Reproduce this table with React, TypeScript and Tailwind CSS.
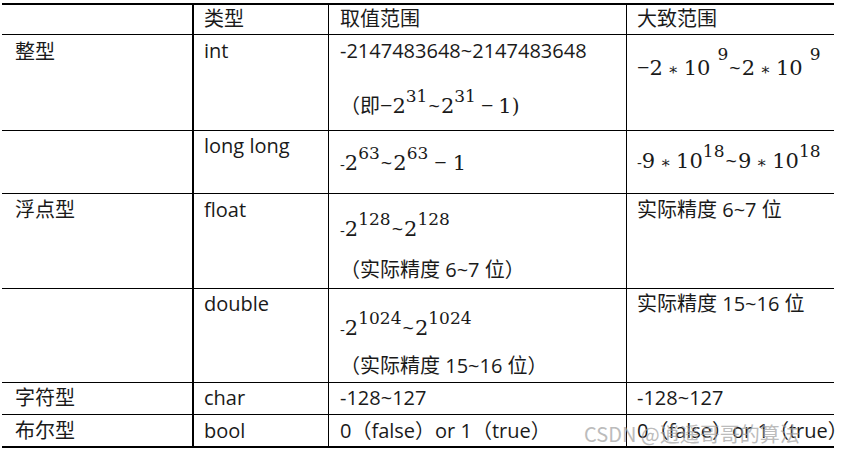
import React from "react";

const text = "font-['Open_Sans','Noto_Sans_CJK_SC',sans-serif] text-[20px] leading-[28px] text-[#1a1a1a]";
const serif = "font-['DejaVu_Serif',serif]";

const Sup = ({ children, hi }: { children: React.ReactNode; hi?: boolean }) => (
  <span className={`${serif} text-[17px] leading-none ${hi ? "align-[15px]" : "align-[11px]"}`}>
    {children}
  </span>
);
const N = ({ children }: { children: React.ReactNode }) => (
  <span className={`${serif} text-[21px]`}>{children}</span>
);
const Tilde = () => <span className="font-['Open_Sans'] text-[20px] mx-[1px]">~</span>;
const Minus = () => <span className="font-['Liberation_Serif'] text-[22px]">−</span>;
const Hy = () => <span className="font-['Open_Sans'] text-[15px]">-</span>;
const Op = () => <span className={`${serif} text-[16px] mx-[5px]`}>∗</span>;

const c1 = "border-r-2 border-black pl-[13px]";
const c2 = "border-r border-black pl-[10px]";
const c3 = "border-r border-black pl-[11px]";
const c4 = "pl-[10px]";

type RowProps = { h: string; cells: React.ReactNode[]; last?: boolean };

const Row = ({ h, cells, last }: RowProps) => (
  <div
    className={`grid grid-cols-[192px_135px_298px_207px] ${h} ${
      last ? "border-b-2" : "border-b"
    } border-black`}
  >
    <div className={c1}>{cells[0]}</div>
    <div className={c2}>{cells[1]}</div>
    <div className={c3}>{cells[2]}</div>
    <div className={c4}>{cells[3]}</div>
  </div>
);

const Line = ({ mt, children }: { mt: string; children: React.ReactNode }) => (
  <div className={`${mt} h-[28px] whitespace-nowrap`}>{children}</div>
);

export default function App() {
  return (
    <div className="w-[841px] h-[453px] bg-white relative overflow-hidden">
      <div className={`${text} ml-[2px] pt-[3px] w-[832px]`}>
        <div className="border-t-2 border-black">
          <Row
            h="h-[30px]"
            cells={[
              <Line mt="mt-0">{""}</Line>,
              <Line mt="mt-0">类型</Line>,
              <Line mt="mt-0">取值范围</Line>,
              <Line mt="mt-0">大致范围</Line>,
            ]}
          />
          <Row
            h="h-[96px]"
            cells={[
              <Line mt="mt-[3px]">整型</Line>,
              <Line mt="mt-[2px]">int</Line>,
              <div>
                <Line mt="mt-[2px]">-2147483648~2147483648</Line>
                <Line mt="mt-[23px]">
                  （即<Minus />
                  <N>2</N>
                  <Sup>31</Sup>
                  <Tilde />
                  <N>2</N>
                  <Sup>31</Sup>
                  <span className="mx-[5px]">
                    <Minus />
                  </span>
                  <N>1</N>
                  <span className={`${serif} text-[20px]`}>)</span>
                </Line>
              </div>,
              <Line mt="mt-[11px]">
                <Minus />
                <N>2</N>
                <Op />
                <N>10</N>
                <span className="ml-[7px]">
                  <Sup hi>9</Sup>
                </span>
                <Tilde />
                <N>2</N>
                <Op />
                <N>10</N>
                <span className="ml-[7px]">
                  <Sup hi>9</Sup>
                </span>
              </Line>,
            ]}
          />
          <Row
            h="h-[63px]"
            cells={[
              <Line mt="mt-0">{""}</Line>,
              <Line mt="mt-[1px]">long long</Line>,
              <Line mt="mt-[14px]">
                <Hy />
                <N>2</N>
                <Sup>63</Sup>
                <Tilde />
                <N>2</N>
                <Sup>63</Sup>
                <span className="mx-[6px]">
                  <Minus />
                </span>
                <N>1</N>
              </Line>,
              <Line mt="mt-[12px]">
                <Hy />
                <N>9</N>
                <Op />
                <N>10</N>
                <Sup>18</Sup>
                <Tilde />
                <N>9</N>
                <Op />
                <N>10</N>
                <Sup>18</Sup>
              </Line>,
            ]}
          />
          <Row
            h="h-[95px]"
            cells={[
              <Line mt="mt-[2px]">浮点型</Line>,
              <Line mt="mt-[2px]">float</Line>,
              <div>
                <Line mt="mt-[17px]">
                  <Hy />
                  <N>2</N>
                  <Sup>128</Sup>
                  <Tilde />
                  <N>2</N>
                  <Sup>128</Sup>
                </Line>
                <Line mt="mt-[17px]">（实际精度 6~7 位）</Line>
              </div>,
              <Line mt="mt-[2px]">实际精度 6~7 位</Line>,
            ]}
          />
          <Row
            h="h-[94px]"
            cells={[
              <Line mt="mt-0">{""}</Line>,
              <Line mt="mt-[1px]">double</Line>,
              <div>
                <Line mt="mt-[21px]">
                  <Hy />
                  <N>2</N>
                  <Sup>1024</Sup>
                  <Tilde />
                  <N>2</N>
                  <Sup>1024</Sup>
                </Line>
                <Line mt="mt-[14px]">（实际精度 15~16 位）</Line>
              </div>,
              <Line mt="mt-[1px]">实际精度 15~16 位</Line>,
            ]}
          />
          <Row
            h="h-[32px]"
            cells={[
              <Line mt="mt-[1px]">字符型</Line>,
              <Line mt="mt-[1px]">char</Line>,
              <Line mt="mt-[1px]">-128~127</Line>,
              <Line mt="mt-[1px]">-128~127</Line>,
            ]}
          />
          <Row
            h="h-[33px]"
            last
            cells={[
              <Line mt="mt-[2px]">布尔型</Line>,
              <Line mt="mt-[2px]">bool</Line>,
              <Line mt="mt-[2px]">0（false）or 1（true）</Line>,
              <Line mt="mt-[2px]">0（false）or 1（true）</Line>,
            ]}
          />
        </div>
      </div>
      <div className="absolute left-[584px] top-[420px] font-['Noto_Sans_CJK_SC',sans-serif] text-[20px] leading-[28px] text-[#a0a0a0] opacity-70 whitespace-nowrap">
        CSDN @逍遥哥哥的算法
      </div>
    </div>
  );
}
